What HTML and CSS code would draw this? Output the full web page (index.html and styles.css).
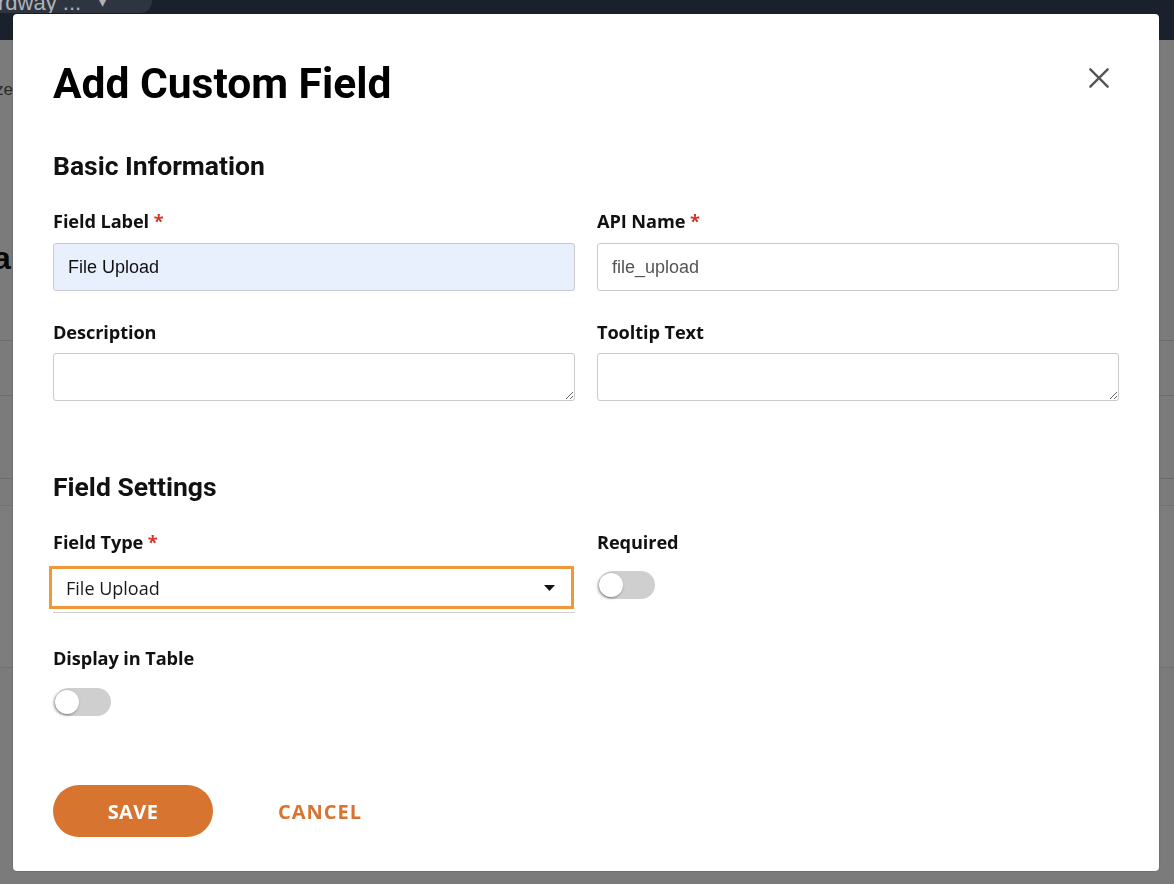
FILE: index.html
```html
<!DOCTYPE html>
<html lang="en">
<head>
<meta charset="utf-8">
<title>Add Custom Field</title>
<link rel="stylesheet" href="styles.css">
</head>
<body>
<div class="page">
  <div class="topbar">
    <div class="workspace"><span class="ws-name">rdway ...</span><span class="chev">&#9662;</span></div>
  </div>
  <div class="bg">
    <div class="bg-row bg-r1"><span class="bg-small">ze</span></div>
    <div class="bg-row bg-r2"><span class="bg-big">a</span></div>
    <div class="bg-row bg-r3 line"></div>
    <div class="bg-row bg-r4 line"></div>
    <div class="bg-row bg-r5 line"></div>
    <div class="bg-row bg-r6 band"></div>
    <div class="bg-row bg-r7"></div>
  </div>
</div>

<div class="overlay"></div>

<div class="modal" role="dialog" aria-labelledby="mtitle">
  <div class="modal-head">
    <h1 id="mtitle" class="modal-title">Add Custom Field</h1>
    <button class="close" aria-label="Close">
      <svg width="26" height="26" viewBox="0 0 24 24"><path d="M4 4 L20 20 M20 4 L4 20" stroke="#555" stroke-width="2.2" stroke-linecap="round" fill="none"/></svg>
    </button>
  </div>

  <h2 class="section-title first">Basic Information</h2>
  <div class="grid">
    <div class="field">
      <label class="label">Field Label <span class="req">*</span></label>
      <input class="input autofill" type="text" value="File Upload">
    </div>
    <div class="field">
      <label class="label">API Name <span class="req">*</span></label>
      <input class="input muted" type="text" value="file_upload">
    </div>
    <div class="field">
      <label class="label">Description</label>
      <textarea class="input textarea"></textarea>
    </div>
    <div class="field">
      <label class="label">Tooltip Text</label>
      <textarea class="input textarea"></textarea>
    </div>
  </div>

  <h2 class="section-title second">Field Settings</h2>
  <div class="grid settings">
    <div class="field">
      <label class="label">Field Type <span class="req">*</span></label>
      <div class="select-wrap">
        <div class="select">
          <span class="select-value">File Upload</span>
          <svg class="caret" width="11" height="6" viewBox="0 0 11 6"><path d="M0 0 H11 L5.5 6 Z" fill="#111"/></svg>
        </div>
      </div>
    </div>
    <div class="field">
      <label class="label">Required</label>
      <div class="toggle req-toggle"><span class="track"></span><span class="knob"></span></div>
    </div>
    <div class="field">
      <label class="label">Display in Table</label>
      <div class="toggle table-toggle"><span class="track"></span><span class="knob"></span></div>
    </div>
  </div>

  <div class="actions">
    <button class="btn-save">SAVE</button>
    <button class="btn-cancel">CANCEL</button>
  </div>
</div>
</body>
</html>
```

FILE: styles.css
```css
* { box-sizing: border-box; }

html, body {
  margin: 0;
  padding: 0;
  width: 1174px;
  height: 884px;
  overflow: hidden;
  background: #ffffff;
  font-family: "Open Sans", "Noto Sans", sans-serif;
}

.page {
  width: 1174px;
  height: 884px;
  display: flex;
  flex-direction: column;
}

.topbar {
  height: 40px;
  background: #1b212c;
  flex: none;
}

.workspace {
  width: 152px;
  height: 13px;
  background: #2f3540;
  border-bottom-right-radius: 12px;
  color: #aeb2b8;
  font-family: "Liberation Sans", Arial, sans-serif;
  overflow: hidden;
  white-space: nowrap;
  display: flex;
  align-items: flex-end;
}

.ws-name {
  font-size: 22px;
  line-height: 22px;
  margin-left: -2px;
  margin-bottom: -1px;
}

.workspace .chev {
  font-size: 14px;
  line-height: 14px;
  margin-left: 18px;
  margin-bottom: 4px;
  color: #aeb2b8;
}

.bg {
  flex: 1;
  display: flex;
  flex-direction: column;
  background: #f6f6f6;
}

.bg-row { flex: none; }
.bg-r1 { height: 60px; padding-top: 38px; }
.bg-r2 { height: 240px; padding-top: 140px; }
.bg-r3 { height: 55px; }
.bg-r4 { height: 83px; }
.bg-r5 { height: 27px; }
.bg-r6 { height: 163px; }
.bg-r7 { height: 100px; }

.line { border-top: 1px solid #d9d9d9; }
.band { background: #fafafa; border-top: 1px solid #e6e6e6; border-bottom: 1px solid #e0e0e0; }

.bg-small {
  font-family: "Liberation Sans", Arial, sans-serif;
  font-size: 17px;
  color: #555;
  margin-left: -5px;
}

.bg-big {
  font-family: "Liberation Sans", Arial, sans-serif;
  font-weight: 700;
  font-size: 32px;
  color: #111;
  margin-left: -7px;
}

.overlay {
  position: fixed;
  left: 0;
  top: 40px;
  right: 0;
  bottom: 0;
  background: rgba(0, 0, 0, 0.5);
}

.modal {
  position: fixed;
  left: 13px;
  top: 14px;
  width: 1146px;
  height: 857px;
  background: #ffffff;
  border-radius: 4px;
  padding: 46px 40px 0 40px;
  box-shadow: 0 0 2px rgba(0,0,0,0.3);
}

.modal-head {
  display: flex;
  align-items: center;
  justify-content: space-between;
  height: 48px;
}

.modal-title {
  margin: 0;
  font-family: Roboto, "Liberation Sans", sans-serif;
  font-weight: 700;
  font-size: 42.5px;
  line-height: 48px;
  color: #000;
}

.close {
  width: 40px;
  height: 40px;
  border: 0;
  background: transparent;
  padding: 0;
  display: flex;
  align-items: center;
  justify-content: center;
  cursor: pointer;
  margin-top: -12px;
}

.section-title {
  margin: 0;
  font-family: Roboto, "Liberation Sans", sans-serif;
  font-weight: 700;
  font-size: 26.5px;
  line-height: 32px;
  color: #111;
}

.section-title.first { margin-top: 42px; }
.section-title.second { margin-top: 70px; }

.grid {
  display: grid;
  grid-template-columns: 522px 522px;
  column-gap: 22px;
  row-gap: 29px;
  margin-top: 27px;
}

.grid.settings { row-gap: 33px; }

.field {
  display: flex;
  flex-direction: column;
  align-items: flex-start;
}

.label {
  font-family: "Open Sans", "Noto Sans", sans-serif;
  font-weight: 700;
  font-size: 18.2px;
  line-height: 24px;
  color: #111;
  margin-bottom: 10px;
  letter-spacing: -0.1px;
}

.req { color: #d93025; }

.input {
  width: 100%;
  height: 48px;
  border: 1px solid #c9c9ce;
  border-radius: 3px;
  background: #fff;
  font-family: "Liberation Sans", Arial, sans-serif;
  font-size: 18px;
  color: #111;
  padding: 0 14px;
  outline: none;
}

.input.autofill { background: #e8f0fe; }
.input.muted { color: #555; }

.textarea {
  resize: vertical;
  padding: 10px 14px;
  display: block;
  margin-top: -1px;
}

.select-wrap {
  width: 100%;
  height: 47px;
  border-bottom: 1px solid #d0d0d0;
  margin-top: 2px;
}

.select {
  width: 525px;
  height: 43px;
  margin-left: -4px;
  border: 3px solid #f0973a;
  display: flex;
  align-items: center;
  justify-content: space-between;
  padding: 0 16px 0 14px;
  background: #fff;
}

.select-value {
  font-family: "Open Sans", "Noto Sans", sans-serif;
  font-size: 18px;
  color: #1a1a1a;
}

.toggle {
  position: relative;
  width: 58px;
  height: 30px;
}

.req-toggle { margin-top: 6px; }
.table-toggle { margin-top: 7px; }

.track {
  position: absolute;
  left: 2px;
  right: 0;
  top: 1px;
  height: 28px;
  border-radius: 14px;
  background: #cfcfcf;
}

.knob {
  position: absolute;
  left: 2px;
  top: 3px;
  width: 24px;
  height: 24px;
  border-radius: 50%;
  background: #fff;
  box-shadow: -1px 1px 3px rgba(0,0,0,0.45);
}

.actions {
  display: flex;
  align-items: center;
  gap: 49px;
  margin-top: 68px;
}

.btn-save {
  width: 160px;
  height: 52px;
  border: 0;
  border-radius: 26px;
  background: #d67430;
  color: #fff;
  font-family: "Open Sans", "Noto Sans", sans-serif;
  font-weight: 700;
  font-size: 20px;
  letter-spacing: 0.4px;
  cursor: pointer;
}

.btn-cancel {
  border: 0;
  background: transparent;
  padding: 0 16px;
  height: 52px;
  color: #d67430;
  font-family: "Open Sans", "Noto Sans", sans-serif;
  font-weight: 700;
  font-size: 20px;
  letter-spacing: 1px;
  cursor: pointer;
}
```
